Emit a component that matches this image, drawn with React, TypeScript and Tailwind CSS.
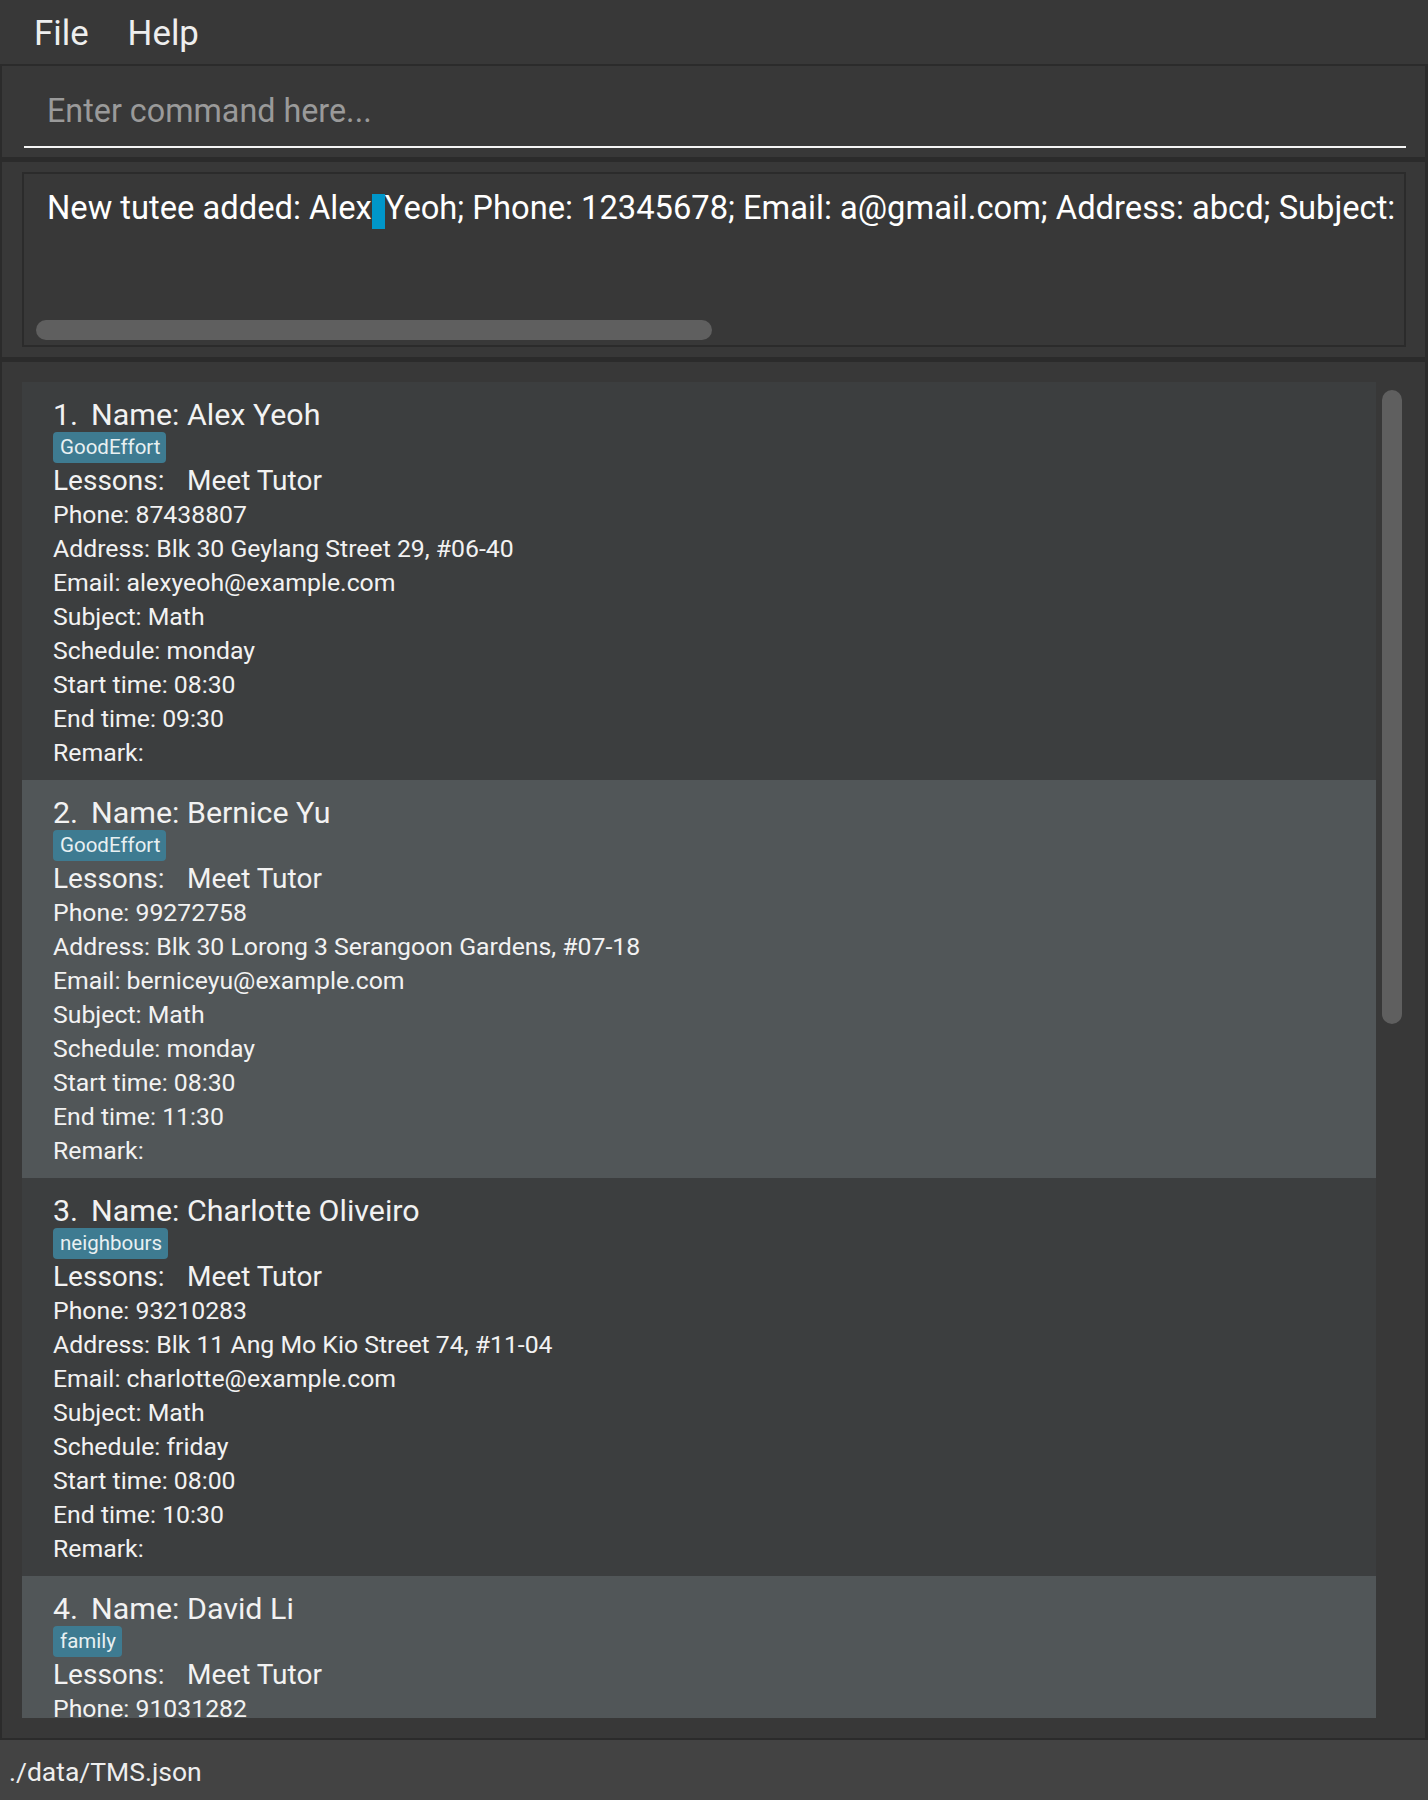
import React from 'react';

interface Tutee {
  name: string;
  tag: string;
  phone: string;
  address: string;
  email: string;
  subject: string;
  schedule: string;
  start: string;
  end: string;
}

const tutees: Tutee[] = [
  { name: 'Alex Yeoh', tag: 'GoodEffort', phone: '87438807', address: 'Blk 30 Geylang Street 29, #06-40', email: 'alexyeoh@example.com', subject: 'Math', schedule: 'monday', start: '08:30', end: '09:30' },
  { name: 'Bernice Yu', tag: 'GoodEffort', phone: '99272758', address: 'Blk 30 Lorong 3 Serangoon Gardens, #07-18', email: 'berniceyu@example.com', subject: 'Math', schedule: 'monday', start: '08:30', end: '11:30' },
  { name: 'Charlotte Oliveiro', tag: 'neighbours', phone: '93210283', address: 'Blk 11 Ang Mo Kio Street 74, #11-04', email: 'charlotte@example.com', subject: 'Math', schedule: 'friday', start: '08:00', end: '10:30' },
  { name: 'David Li', tag: 'family', phone: '91031282', address: 'Blk 436 Serangoon Gardens Street 26, #16-43', email: 'lidavid@example.com', subject: 'Math', schedule: 'tuesday', start: '09:00', end: '10:00' },
];

const TuteeCard: React.FC<{ tutee: Tutee; index: number }> = ({ tutee, index }) => (
  <div className={`h-[398px] shrink-0 pl-[31px] pt-[16px] text-[#f2f2f2] ${index % 2 === 0 ? 'bg-[#3c3e3f]' : 'bg-[#515658]'}`}>
    <div className="flex gap-[13px] text-[30.4px] leading-[34px] whitespace-nowrap">
      <span>{index + 1}.</span>
      <span>Name: {tutee.name}</span>
    </div>
    <div className="flex">
      <span className="h-[31px] rounded-[4px] bg-[#3e7b91] pl-[7px] pr-[6px] text-[20.5px] leading-[31px] text-[#e8f0f2]">
        {tutee.tag}
      </span>
    </div>
    <div className="flex text-[28px] leading-[35px] whitespace-nowrap">
      <span className="w-[134px]">Lessons:</span>
      <span>Meet Tutor</span>
    </div>
    <div className="text-[24.8px] leading-[34px] whitespace-nowrap">
      <div>Phone: {tutee.phone}</div>
      <div>Address: {tutee.address}</div>
      <div>Email: {tutee.email}</div>
      <div>Subject: {tutee.subject}</div>
      <div>Schedule: {tutee.schedule}</div>
      <div>Start time: {tutee.start}</div>
      <div>End time: {tutee.end}</div>
      <div>Remark:</div>
    </div>
  </div>
);

export default function App() {
  return (
    <div className="w-[1428px] h-[1800px] bg-[#2b2b2b] flex flex-col overflow-hidden font-['Roboto','Liberation_Sans',sans-serif]">
      {/* menu bar */}
      <div className="h-[64px] shrink-0 bg-[#383838] flex gap-[39px] pl-[34px] pt-[14px] text-[34.8px] leading-[39px] text-[#eeeeee]">
        <span>File</span>
        <span>Help</span>
      </div>

      {/* command box */}
      <div className="mt-[2px] ml-[2px] mr-[3px] h-[91px] shrink-0 bg-[#383838] pt-[16px] pl-[22px] pr-[19px]">
        <div className="h-[66px] border-b-2 border-[#f4f4f4] pl-[23px] text-[32.3px] leading-[58px] text-[#9a9a9a] whitespace-nowrap">
          Enter command here...
        </div>
      </div>

      {/* result display */}
      <div className="mt-[5px] ml-[2px] mr-[3px] h-[195px] shrink-0 bg-[#383838] pt-[10px] pl-[20px] pr-[19px]">
        <div className="h-[175px] border-2 border-[#2b2b2b] bg-[#383838] flex flex-col overflow-hidden">
          <div className="pt-[15px] pl-[23px] text-[32.7px] leading-[38px] text-white whitespace-nowrap overflow-hidden">
            New tutee added: Alex<span className="inline-block w-[13px] h-[35px] bg-[#0096c9] align-[-10px]"></span>Yeoh; Phone: 12345678; Email: a@gmail.com; Address: abcd; Subject: Math; Schedule: monday; Start time: 08:30; End time: 09:30
          </div>
          <div className="mt-[91px] ml-[12px] w-[676px] h-[20px] rounded-full bg-[#5f5f5f]" />
        </div>
      </div>

      {/* tutee list */}
      <div className="mt-[5px] ml-[2px] mr-[3px] h-[1376px] shrink-0 bg-[#383838] flex pl-[20px] pt-[20px] pb-[20px]">
        <div className="w-[1354px] h-[1336px] flex flex-col overflow-hidden">
          {tutees.map((t, i) => (
            <TuteeCard key={t.name} tutee={t} index={i} />
          ))}
        </div>
        <div className="ml-[6px] mt-[8px] w-[20px] h-[634px] rounded-full bg-[#5f5f5f]" />
      </div>

      {/* status bar */}
      <div className="mt-[2px] flex-1 bg-[#434343] pl-[9px] pt-[16px] text-[26.5px] leading-[32px] text-[#eeeeee]">
        ./data/TMS.json
      </div>
    </div>
  );
}
